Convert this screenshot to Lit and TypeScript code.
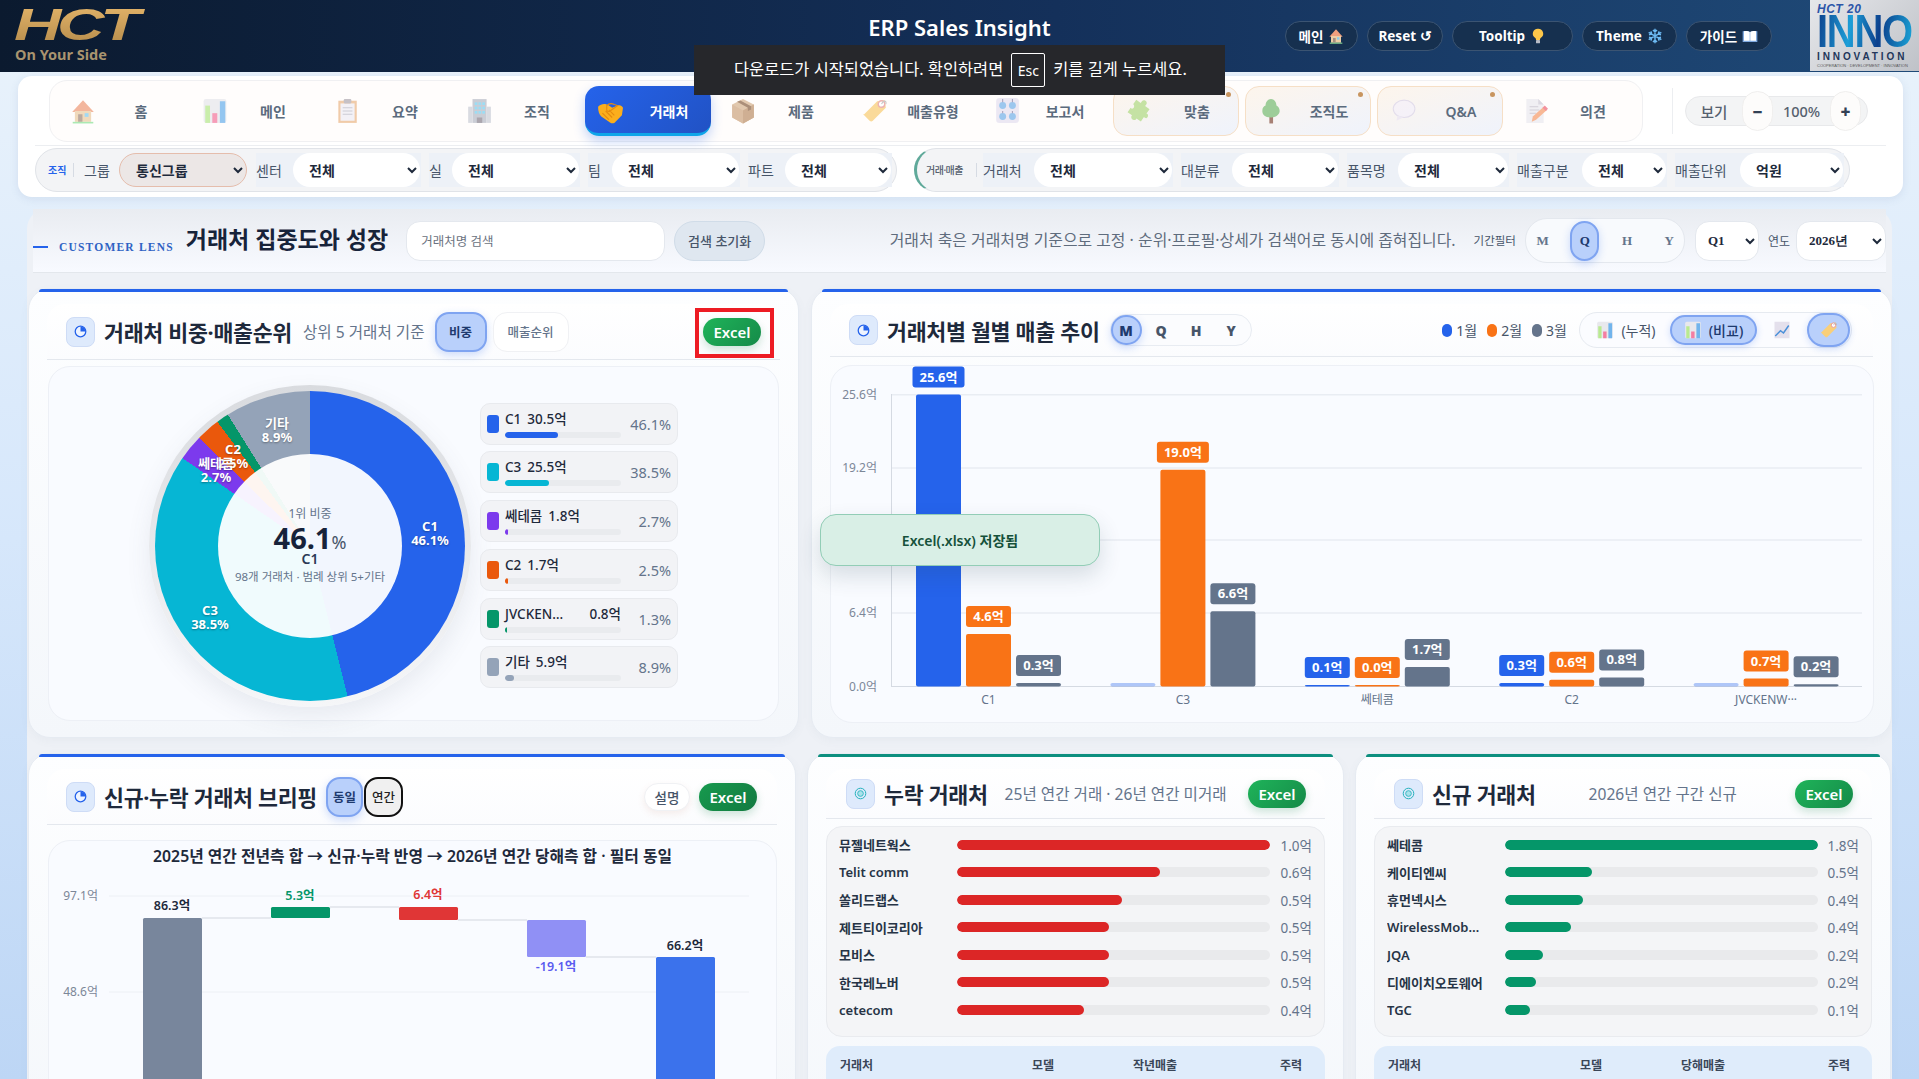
import { LitElement, html, css, svg } from "lit";
import { customElement } from "lit/decorators.js";

const I: Record<string, any> = {
  house: svg`<path d="M2 13 12 2l10 11H2z" fill="#ef9f7e"/><rect x="4.500" y="12" width="15" height="10" fill="#eccda6"/><rect x="7.500" y="15" width="4" height="7" fill="#a68f80"/><rect x="13.500" y="14" width="3.600" height="3.400" fill="#82cdf2"/><rect x="2.500" y="22" width="19" height="1.500" fill="#8fe39b"/>`,
  chart: svg`<rect x="1.500" y="1" width="21" height="22" rx="2" fill="#e8e8ed"/><rect x="3" y="7" width="4.400" height="16" fill="#b9ea91"/><rect x="9.500" y="14" width="4.600" height="9" fill="#f47ea2"/><rect x="16.500" y="3" width="5" height="20" fill="#71b4ec"/>`,
  clip: svg`<rect x="4" y="2.500" width="17" height="20.500" fill="#ecbb8e"/><rect x="6" y="5" width="13" height="16" fill="#efeef5"/><rect x="9" y="1" width="7" height="4" rx="1" fill="#b3aeb4"/><path d="M8 9h9M8 12h9M8 15h9" stroke="#bdbcc8"/>`,
  bld: svg`<rect x="6" y="1" width="13" height="22" fill="#b9bdc8"/><rect x="2" y="8" width="4" height="15" fill="#cdd0d8"/><rect x="19" y="8" width="4" height="15" fill="#cdd0d8"/><g fill="#7cd3f2"><rect x="8" y="4" width="2.500" height="2.500"/><rect x="11.500" y="4" width="2.500" height="2.500"/><rect x="15" y="4" width="2.500" height="2.500"/><rect x="8" y="8" width="2.500" height="2.500"/><rect x="11.500" y="8" width="2.500" height="2.500"/><rect x="15" y="8" width="2.500" height="2.500"/><rect x="8" y="12" width="2.500" height="2.500"/><rect x="11.500" y="12" width="2.500" height="2.500"/><rect x="15" y="12" width="2.500" height="2.500"/></g><rect x="10" y="18" width="5" height="5" fill="#8f8a94"/>`,
  hands: svg`<path d="M1 8c3-3 7-3 10-1l3 2 5-2c2-1 4 0 5 2l-1 7-7 7c-2 1-4 0-5-1l-7-5c-2-2-3-5-3-9z" fill="#fbae1c"/><path d="M9 7c2-2 5-2 7-1l3 1-7 5c-1 1-3 0-3-1zM5 14l6 6M8 12l6 6M11 11l5 5" stroke="#e58a0f" stroke-width="1" fill="none"/>`,
  box: svg`<path d="M12 1 22 6v12l-10 5.500L2 18V6z" fill="#d8b795"/><path d="M2 6l10 5.500L22 6v12l-10 5.500L2 18z" fill="#cfa986"/><path d="M12 11.500V23.500L22 18V6z" fill="#bf9670"/><path d="m6.500 3.500 10 5.500v3l3-1.500V7.500l-10-5.300z" fill="#8f6b4e"/>`,
  tag: svg`<path d="M2 15 14 3l7-1 1 7-12 12c-1 1-2 1-3 0l-5-5c-1-.4-1-1 0-1z" fill="#f9cf7a"/><circle cx="18" cy="5.500" r="3" fill="#fff" stroke="#e79a9a" stroke-width="1.300"/><path d="M18 5.500c2-4 5-3 4 0" stroke="#b8b8b8" fill="none"/>`,
  knob: svg`<rect x="2" y="0" width="21" height="23" rx="3" fill="#e6e2f1"/><g fill="#7cb6ea"><circle cx="8" cy="7" r="3.200"/><circle cx="17" cy="7" r="3.200"/><circle cx="8" cy="17" r="3.200"/><circle cx="17" cy="17" r="3.200"/></g><path d="M8 1v3M17 1v3M8 12v2M17 12v2" stroke="#8b88a8"/>`,
  puzzle: svg`<path d="M9 3c0-3 5-3 5 0v2h5v5c3-1 4 4 1 4h-1v5h-5c1 3-4 4-5 1v-1H4v-5c3 1 3-4 0-4V5h5z" fill="#b4dc8a" transform="rotate(35 12 12)"/>`,
  tree: svg`<rect x="10.500" y="17" width="3.400" height="6.500" fill="#8d5a4a"/><path d="M12 1c3 0 5 3 5 6 2 1 3 3 3 5s-2 6-8 6-8-3-8-6 1-4 3-5c0-3 2-6 5-6z" fill="#7fc07c"/>`,
  bubble: svg`<ellipse cx="13" cy="10" rx="10" ry="8" fill="#f5f1fa" stroke="#dcd6ea"/><path d="M7 16l-1 5 6-3z" fill="#ebe6f3"/>`,
  memo: svg`<path d="M4 1h11l5 5v17H4z" fill="#ecebf0"/><path d="M15 1v5h5z" fill="#cfcdd8"/><path d="M7 8h8M7 11h9M7 14h6" stroke="#c2c0cc"/><path d="m9 22 1-5 10-9 3 3-10 9z" fill="#f6a173"/><path d="m19 9 2-2 3 3-2 2z" fill="#ef6f80"/>`,
  bulb: svg`<path d="M12 1a7.500 7.500 0 0 0-4 14c1 1 1 2 1 3h6c0-1 0-2 1-3a7.500 7.500 0 0 0-4-14z" fill="#fdc74a"/><rect x="9" y="18" width="6" height="5" rx="1" fill="#b8bcc6"/>`,
  snow: svg`<g stroke="#6cb9f2" stroke-width="2.200" fill="none"><path d="M12 1v22M2.500 6.500l19 11M21.500 6.500l-19 11M9 3l3 3 3-3M9 21l3-3 3 3M3 10l4-1-1-4M21 14l-4 1 1 4M21 10l-4-1 1-4M3 14l4 1-1 4"/></g>`,
  book: svg`<path d="M1 5c4-1 8-1 11 1 3-2 7-2 11-1v16H1z" fill="#7fa9e0"/><path d="M3 5c3-1 7 0 8.500 1v13H3zM12.500 6c2-1 6-2 8.500-1v14h-8.500z" fill="#fff"/>`,
};
const ic = (n: string, cls = "ico") => html`<svg class=${cls} viewBox="0 0 24 24">${I[n]}</svg>`;

const NAV = [["house","홈"],["chart","메인"],["clip","요약"],["bld","조직"],["hands","거래처","on"],["box","제품"],["tag","매출유형"],["knob","보고서"],["puzzle","맞춤","sp"],["tree","조직도","sp"],["bubble","Q&A","sp"],["memo","의견"]];
const F1 = [["센터",165,37,"전체"],["실",151,23,"전체"],["팀",152,24,"전체"],["파트",144,37,"전체"]];
const F2 = [["거래처",190,51,"전체"],["대분류",158,51,"전체"],["품목명",162,51,"전체"],["매출구분",150,65,"전체"],["매출단위",169,65,"억원"]];
const PIE = [
  ["#2563eb",46.1],["#06b6d4",38.5],["#7c3aed",2.7],["#ea580c",2.5],["#059669",1.3],["#94a3b8",8.9],
] as [string, number][];
const PL = [["C1","46.1%",281,134],["C3","38.5%",61,218],["기타","8.9%",128,31],["C2","2.5%",84,57],["쎄테콤","2.7%",67,71]] as [string,string,number,number][];
const LEG = [["#2563eb","C1","30.5억","46.1%",46],["#06b6d4","C3","25.5억","38.5%",38],["#7c3aed","쎄테콤","1.8억","2.7%",3],["#ea580c","C2","1.7억","2.5%",3],["#059669","JVCKEN…","0.8억","1.3%",2],["#94a3b8","기타","5.9억","8.9%",8]] as [string,string,string,string,number][];
const LOST = [["뮤젤네트웍스",100,"1.0억"],["Telit comm",65,"0.6억"],["쏠리드랩스",52.6,"0.5억"],["제트티이코리아",48.6,"0.5억"],["모비스",48.6,"0.5억"],["한국레노버",48.6,"0.5억"],["cetecom",40.6,"0.4억"]] as [string,number,string][];
const NEWC = [["쎄테콤",100,"1.8억"],["케이티엔씨",27.8,"0.5억"],["휴먼넥시스",25,"0.4억"],["WirelessMob…",21,"0.4억"],["JQA",12,"0.2억"],["디에이치오토웨어",10,"0.2억"],["TGC",8,"0.1억"]] as [string,number,string][];
const GROUPS = [
  ["C1",[25.6,4.6,0.3],["25.6억","4.6억","0.3억"]],
  ["C3",[0.3,19.0,6.6],[null,"19.0억","6.6억"]],
  ["쎄테콤",[0.1,0.02,1.7],["0.1억","0.0억","1.7억"]],
  ["C2",[0.3,0.6,0.8],["0.3억","0.6억","0.8억"]],
  ["JVCKENW···",[0.3,0.7,0.2],[null,"0.7억","0.2억"]],
] as [string,number[],(string|null)[]][];
const BC = ["#2563eb","#f97316","#64748b"];

@customElement("app-root")
export class AppRoot extends LitElement {
  static styles = css`
    :host{display:block;width:100%;height:100vh;overflow:hidden;position:relative;font-family:"Noto Sans","Noto Sans CJK KR",sans-serif;color:#1e293b;background:linear-gradient(180deg,#eaf3fb 0,#d6e7fb 50%,#bdd6f5 100%)}
    *{box-sizing:border-box}
    svg{display:block;flex:none}
    .top{height:72px;display:grid;grid-template-columns:1fr auto 1fr;align-items:stretch;background:linear-gradient(90deg,#0b1a2f 0%,#14305a 55%,#1f4a78 100%)}
    .logo{padding:7px 0 0 14px;display:flex;flex-direction:column}
    .hct{font:italic 900 45px/36px "Liberation Sans",sans-serif;letter-spacing:-3px;background:linear-gradient(180deg,#e0b167,#b98f4e);-webkit-background-clip:text;background-clip:text;color:transparent;width:130px;transform:scaleX(1.46);transform-origin:left}
    .side{font-size:14.500px;font-weight:700;color:#a8946f;line-height:20px;margin-top:1px;margin-left:1px}
    .title{align-self:start;margin-top:11px;font-size:22px;font-weight:600;color:#fff;line-height:32px}
    .tr{display:flex;justify-content:flex-end;align-items:flex-start}
    .tbtns{display:flex;gap:9px;margin-top:21px;margin-right:38px}
    .tb{height:30px;border-radius:15px;background:#16304f;border:1px solid #3b5472;color:#fff;font-size:13.500px;font-weight:700;display:flex;align-items:center;justify-content:center;gap:5px;padding:0}
    .tb svg{width:16px;height:16px}
    .inno{width:109px;height:71px;background:linear-gradient(135deg,#e6e7ea,#bfc2c8);padding:3px 0 0 7px;display:flex;flex-direction:column;overflow:hidden}
    .i20{font:italic 800 12px/12px "Liberation Sans",sans-serif;color:#2c55a8;letter-spacing:.5px}
    .i1{font:900 46px/33px "Liberation Sans",sans-serif;letter-spacing:-1.500px;background:linear-gradient(100deg,#0c3f8c,#1d9fd8 35%,#0c3f8c 65%,#1aa5d8);-webkit-background-clip:text;background-clip:text;color:transparent;transform:scaleX(.87);transform-origin:left;height:33px;width:max-content}
    .i2{font:700 10px/12px "Liberation Sans",sans-serif;letter-spacing:2.900px;color:#22365a;margin-top:3px}
    .i3{font:400 4px/6px "Liberation Sans",sans-serif;color:#555;white-space:nowrap}
    .bar0{margin:4px 16px 0 18px;height:121px;border-radius:14px;background:#fff;padding:4px 0 0;display:flex;flex-direction:column;box-shadow:0 2px 8px rgba(80,110,160,.12)}
    .nr{display:flex;height:62px;padding-left:31px}
    .nav{width:1594px;height:62px;border:1px solid #f0f0f2;border-radius:18px;background:#fffdfc;padding:5px 0 0 7px;display:flex;gap:6px}
    .ni{position:relative;width:126px;height:50px;border-radius:14px;display:flex;align-items:center;padding-left:12px;border:1px solid transparent;font-size:14px;font-weight:600;color:#5b6b7d}
    .ico{width:26px;height:26px;opacity:.75}
    .ni .l{position:absolute;left:42px;right:0;text-align:center}
    .ni.on{background:linear-gradient(135deg,#2563eb,#2152c4);color:#fff;font-weight:700;border:0;border-bottom:3px solid #0ea5e9;box-shadow:0 5px 12px rgba(37,99,235,.28);padding-top:2px}
    .ni.on .ico{opacity:1}
    .ni.sp{background:linear-gradient(160deg,#fdf5ec,#eff3fc);border-color:#f6dfc6}
    .dot{position:absolute;right:7px;top:5px;width:5px;height:5px;border-radius:50%;background:#c8955f}
    .sep{width:1px;height:46px;background:#eceef1;margin:8px 0 0 29px}
    .view{margin:16px 0 0 12px;width:183px;height:30px;border-radius:15px;background:#f3f4f5;border:1px solid #e8e9eb;display:flex;align-items:center;font-size:14.500px;color:#55606e;position:relative}
    .vl{width:56px;text-align:center;font-weight:500}
    .vb{width:31px;height:40px;border-radius:16px;background:#fdfcfb;border:1px solid #f0efee;display:flex;align-items:center;justify-content:center;font-weight:900;color:#334155;font-size:17px;margin:0}
    .vp{width:57px;text-align:center;font-weight:500}
    .hr{height:1px;background:#eceef1;margin:3px 17px 0 17px}
    .fr{display:flex;padding-left:17px;margin-top:2px;gap:17px}
    .fg{height:44px;border:1px solid #e0e3e8;border-radius:22px;background:#f3f4f6;display:flex;align-items:center;gap:8px}
    .fg.a{width:862px}.fg.b{width:936px;border-left:3px solid #5fa99a}
    .tag{font-size:10px;font-weight:700;color:#2563eb;width:26px;margin-left:12px;border-right:1px solid #d6dbe3;line-height:14px}
    .fg.b .tag{color:#55606e;font-weight:500;width:51px;margin-left:9px;margin-right:-2px;letter-spacing:-.5px;white-space:nowrap}
    .g0{font-size:14px;color:#475569;margin-left:2px;width:27px;white-space:nowrap}
    .fd{height:34px;background:#edf1f7;display:flex;align-items:center;font-size:14px;color:#475569}
    .fd span{white-space:nowrap;flex:none}
    select{appearance:auto;height:34px;border:0;border-radius:17px;background:#fff;font:600 14px "Noto Sans","Noto Sans CJK KR",sans-serif;color:#1e293b;padding:0 0 0 12px;flex:none;outline:0}
    select.pk{width:128px;background:#ece7e6;border:1px solid #e5bdac;margin-right:1px}
    .main{margin:12px 0 0 27px;width:1865px;height:1000px;background:#eef1f6;border-radius:20px 20px 0 0;padding:0 0 0 1px}
    .mh{height:64px;margin:0 6px 0 5px;border-bottom:1px solid #e3e7ec;display:flex;align-items:center;background:linear-gradient(180deg,#e9ecf1,#f8faff)}
    .dash{width:15px;height:2px;background:#2563eb;margin-top:13px}
    .cl{font:700 11.500px "Liberation Serif",serif;letter-spacing:1.200px;color:#2f62c4;margin:13px 0 0 11px;white-space:nowrap}
    .h1{font-size:23px;font-weight:700;color:#17233a;margin:-6px 0 0 12px;white-space:nowrap}
    .srch{width:259px;height:40px;border-radius:14px;border:1px solid #e4e8ee;background:#fff;margin-left:18px;font-size:12.500px;color:#6b7280;display:flex;align-items:center;padding-left:14px}
    .rs{width:91px;height:40px;border-radius:20px;background:#dfe7f0;border:1px solid #d0dce8;margin-left:9px;display:flex;align-items:center;justify-content:center;font-size:13px;font-weight:500;color:#475569}
    .desc{margin-left:auto;font-size:15.900px;color:#5f6c7d;white-space:nowrap;margin-top:-2px}
    .pf{font-size:11.500px;margin-left:18px;color:#475569;white-space:nowrap;margin-top:-2px}
    .ps{margin-left:9px;width:160px;height:45px;border-radius:22px;background:#f8fafd;border:1px solid #e4e8ee;display:flex;align-items:center;gap:13px;padding-left:2px;font:700 13px "Liberation Serif",serif;color:#64748b}
    .ps b{width:30px;height:40px;border-radius:15px;display:flex;align-items:center;justify-content:center;font-weight:700}
    .ps b.on,.sg b.on,.bt.on{background:#b9d0fb;border:2px solid #7fa4f1;color:#1e3a6e;box-shadow:0 3px 9px rgba(37,99,235,.22)}
    .sl{height:40px;border-radius:14px;border:1px solid #e4e8ee;background:#fff;font:700 13px "Liberation Serif",serif;padding-left:8px}
    .sl.q{width:64px;margin-left:10px}.sl.y{width:90px;margin-left:6px}
    .yl{font-size:12px;color:#475569;margin-left:9px}
    .rw{display:grid;gap:12px;margin-top:15px}
    .r1{grid-template-columns:771px 1081px;height:450px}
    .r2{grid-template-columns:768px 537px 536px;gap:12px 11px;margin-top:15px;height:400px}
    .card{background:linear-gradient(180deg,#fdfeff,#f4f7fb);border-radius:22px;border:1px solid #e6ebf2;padding:0 18px;min-width:0;box-shadow:0 3px 10px rgba(90,110,140,.05)}
    .tp{height:3px;margin:0 -8px;border-radius:3px 3px 0 0;background:#2563eb}
    .tp.t{background:#0d8f7f}
    .hd{display:flex;align-items:center;margin-top:12px;height:56px;background:linear-gradient(180deg,#fff,#fbfcfe);border-radius:18px 18px 0 0;border-bottom:1px solid #e4e8ee;padding-left:19px;position:relative}
    .cio{width:29px;height:30px;border-radius:8px;background:#deeafc;border:1px solid #cedcf6;display:flex;align-items:center;justify-content:center;flex:none}
    .cio svg{width:13px;height:13px}
    .h2{font-size:21.700px;font-weight:700;color:#1e293b;margin-left:9px;white-space:nowrap;letter-spacing:-.3px}
    .sub{font-size:15.600px;color:#64748b;white-space:nowrap}
    .bt{height:40px;border-radius:14px;display:flex;align-items:center;justify-content:center;font-size:12.500px;font-weight:500;background:#fff;border:1px solid #f0f1f4;color:#64748b;flex:none}
    .bt.on{font-weight:700}
    .xl{height:28px;border-radius:14px;width:58px;background:linear-gradient(135deg,#1fb45a,#158a48);color:#fff;font-size:15px;font-weight:600;display:flex;align-items:center;justify-content:center;flex:none;box-shadow:0 4px 8px rgba(22,130,70,.2)}
    .redb{position:absolute;right:6px;top:4px;width:79px;height:50px;border:4px solid #ed1c24}
    .pn{background:#f9fbff;border:1px solid #edf0f6;border-radius:22px;margin-top:6px;height:355px;display:flex;align-items:center;margin-left:1px;margin-right:1px;padding-top:4px}
    .pie{position:relative;width:322px;height:322px;margin-left:100px;border-radius:50%;background:linear-gradient(180deg,#d9dbdf,#f5f6f8);box-shadow:0 10px 24px rgba(80,90,110,.1);flex:none}
    .cone{position:absolute;inset:6px;border-radius:50%}
    .hole{position:absolute;inset:69px;border-radius:50%;background:rgba(255,255,255,.94);display:flex;flex-direction:column;align-items:center;color:#64748b;padding-top:51px}
    .hole .a{font-size:12px;line-height:18px}
    .hole .b{font-size:29px;font-weight:700;line-height:34px;color:#17233a;margin-top:-2px}
    .hole .b i{font-style:normal;font-size:18px;font-weight:400;color:#475569}
    .hole .c{font-size:14px;font-weight:600;line-height:18px;color:#2a3a55;margin-top:-9px}
    .hole .d{font-size:11.500px;line-height:20px;white-space:nowrap;margin-top:-1px}
    .pl{position:absolute;color:#fff;font-size:13px;font-weight:700;line-height:14px;text-align:center;transform:translateX(-50%);text-shadow:0 1px 2px rgba(0,0,0,.35);white-space:nowrap}
    .lg{margin-left:9px;display:flex;flex-direction:column;gap:6.800px;width:198px}
    .li{height:42px;border-radius:10px;background:#f2f3f6;border:1px solid #e8eaee;position:relative;padding-left:6px;display:flex;align-items:center}
    .sw{width:12px;height:18px;border-radius:3px;flex:none}
    .lx{margin-left:6px;width:116px}
    .lt{display:flex;justify-content:space-between;font-size:13.500px;font-weight:500;color:#1e293b;line-height:19px;white-space:nowrap;padding-bottom:3px}
    .lt span+span{margin-left:6px}
    .lt.e{justify-content:space-between}.lt:not(.e){justify-content:flex-start}
    .tk{height:6px;background:#e9ebee;border-radius:3px;overflow:hidden}
    .tk i{display:block;height:100%;border-radius:3px}
    .lp{position:absolute;right:6px;top:50%;transform:translateY(-50%);font-size:14.500px;color:#64748b}
    .hd2{height:53px}
    .sg{display:flex;align-items:center;margin-left:10px;width:142px;height:32px;border-radius:16px;background:#fbfcfe;border:1px solid #e8ecf2;font-size:14px;font-weight:700;color:#475569;flex:none}
    .sg b{width:33px;height:30px;border-radius:15px;display:flex;align-items:center;justify-content:center;margin-right:4px}
    .ml{margin-left:auto;display:flex;align-items:center;font-size:14px;color:#475569;gap:4px;white-space:nowrap}
    .ml i{width:10px;height:13px;border-radius:5px;display:block}
    .ml i:not(:first-child){margin-left:6px}
    .tg{margin-left:12px;margin-right:21px;width:273px;height:36px;border-radius:18px;border:1px solid #e6eaf0;background:#fbfcff;display:flex;align-items:center;font-size:14px;color:#475569;position:relative;flex:none}
    .tg .o{display:flex;align-items:center;gap:7px;height:30px;justify-content:center;white-space:nowrap}
    .tg svg{width:18px;height:20px}
    .tg .on{background:#b9d0fb;border:2px solid #7fa4f1;border-radius:15px;box-shadow:0 2px 7px rgba(37,99,235,.2)}
    .pc{background:#f9fbff;border:1px solid #edf0f6;border-radius:22px;margin:8px 0 0 0;height:358px;width:1044px;overflow:hidden}
    .wf{background:#f9fbff;border:1px solid #edf0f6;border-radius:22px;margin:15px 0 0 1px;width:729px;height:300px}
    .wt{text-align:center;font-size:15.800px;font-weight:600;color:#1e293b;line-height:20px;margin-top:5px;white-space:nowrap}
    .sm{height:50px;padding-left:20px}
    .br{background:#f4f5f7;border:1px solid #e9ebef;border-radius:16px;margin-top:7px;height:211px;padding:4px 12px 0}
    .rr{display:grid;grid-template-columns:118px 313px 1fr;height:27.500px;align-items:center;font-size:13px;font-weight:600;color:#263446}
    .rr .nm{white-space:nowrap;overflow:hidden}
    .rt{height:10px;border-radius:5px;background:#e9eaec;overflow:hidden}
    .rt i{display:block;height:100%;border-radius:5px}
    .rv{text-align:right;font-size:13.500px;font-weight:400;color:#64748b}
    .th{margin-top:9px;height:60px;background:#dfecfb;border-radius:14px 14px 0 0;display:grid;grid-template-columns:192px 101px 147px 1fr;padding:10px 0 0 14px;font-size:12px;font-weight:600;color:#3a4658;line-height:20px}
    .nt{position:absolute;left:694px;top:45px;width:531px;height:50px;background:#26272b;color:#fff;font-size:16.400px;display:flex;align-items:center;padding:0 0 4px 40px;white-space:nowrap}
    .nt kbd{font:inherit;font-size:14px;border:1px solid #fff;border-radius:2px;height:34px;width:34px;display:flex;align-items:center;justify-content:center;margin:4px 8px 0 8px}
    .toast{position:absolute;left:820px;top:514px;width:280px;height:52px;border-radius:16px;background:#d9efe6;border:1px solid #92cdb6;box-shadow:0 10px 22px rgba(40,70,80,.16);display:flex;align-items:center;justify-content:center;font-size:14px;font-weight:600;color:#15513a}
    text{font-family:"Noto Sans","Noto Sans CJK KR",sans-serif}
  `;

  cone() {
    let a = 0;
    const s = PIE.map(([c, v]) => { const f = a; a += v; return `${c} ${f}% ${a}%`; }).join(",");
    return `background:conic-gradient(${s})`;
  }

  field(f: any[]) {
    return html`<div class="fd" style="width:${f[1]}px"><span style="width:${f[2]}px">${f[0]}</span><select style="width:${f[1] - f[2] - 1}px"><option>${f[3]}</option></select></div>`;
  }

  pieIco() { return html`<svg viewBox="0 0 16 16"><circle cx="8" cy="8" r="6.500" fill="#eef4ff" stroke="#2563eb" stroke-width="1.600"/><path d="M8 8V2a6 6 0 0 1 6 6z" fill="#2563eb"/></svg>`; }
  ringIco() { return html`<svg viewBox="0 0 16 16"><circle cx="8" cy="8" r="6.500" fill="none" stroke="#22b0bb" stroke-width="1.200"/><circle cx="8" cy="8" r="3.500" fill="#a8e2ea" stroke="#22b0bb"/></svg>`; }

  barChart() {
    const y0 = 685.5, k = 292 / 25.6;
    const grid = [[393.7,"25.6억"],[467,"19.2억"],[539,""],[612,"6.4억"]] as [number,string][];
    return html`<svg width="1042" height="356" viewBox="831 365 1042 356">
      ${grid.map(([y, t]) => svg`<line x1="891" x2="1862" y1=${y} y2=${y} stroke="#e9edf3" stroke-width="1.500"/><text x="877" y=${y + 4} text-anchor="end" font-size="12" fill="#7c8798">${t}</text>`)}
      <text x="877" y="689.500" text-anchor="end" font-size="12" fill="#7c8798">0.0억</text>
      <line x1="891.500" x2="891.500" y1="393" y2="686" stroke="#d5dae2"/><line x1="891" x2="1862" y1="685.500" y2="685.500" stroke="#d5dae2"/>
      ${GROUPS.map(([name, vals, labs], g) => {
        const gx = 916 + g * 194.4;
        return svg`${vals.map((v, i) => {
          const x = gx + i * 50, h = Math.max(v * k, 1.5), lab = labs[i], yt = y0 - h;
          const w = g === 0 && i === 0 || lab === "19.0억" ? 52 : 45;
          const lx = x + 22.5 - w / 2;
          const ly = yt - 28;
          return svg`<rect x=${x} y=${yt} width="45" height=${h} rx="2" fill=${BC[i]} opacity=${lab ? 1 : 0.35}/>
            ${lab ? svg`<rect x=${lx} y=${ly} width=${w} height="21" rx="3" fill=${BC[i]}/><text x=${x + 22.5} y=${ly + 15} text-anchor="middle" font-size="13" font-weight="700" fill="#fff">${lab}</text>` : ""}`;
        })}<text x=${gx + 72.5} y="703" text-anchor="middle" font-size="12" fill="#64748b">${name}</text>`;
      })}
    </svg>`;
  }

  waterfall() {
    const bars = [
      [143, 917, 300, "#78869c", "86.3억", 172, 909, "#1e293b"],
      [271, 906, 11, "#059669", "5.3억", 300, 899, "#059669"],
      [399, 906, 13, "#e03636", "6.4억", 428, 898, "#e03636"],
      [527, 919, 37, "#9090f5", "-19.1억", 556, 970, "#5b5bf0"],
      [656, 956, 300, "#3b72ec", "66.2억", 685, 949, "#1e293b"],
    ] as [number, number, number, string, string, number, number, string][];
    const conn = [[202, 271, 917], [330, 399, 906], [458, 527, 919], [586, 656, 956]];
    return html`<svg width="727" height="240" viewBox="49 865 727 240">
      <line x1="109" x2="749" y1="895" y2="895" stroke="#edf0f5"/><line x1="109" x2="749" y1="991" y2="991" stroke="#edf0f5"/>
      <text x="98" y="899" text-anchor="end" font-size="12" fill="#7c8798">97.1억</text><text x="98" y="995" text-anchor="end" font-size="12" fill="#7c8798">48.6억</text>
      ${conn.map(([a, b, y]) => svg`<line x1=${a} x2=${b} y1=${y} y2=${y} stroke="#dfe3ea" stroke-width="1.500"/>`)}
      ${bars.map(([x, y, h, c, t, tx, ty, tc]) => svg`<rect x=${x} y=${y} width="59" height=${h} rx="1.500" fill=${c}/><text x=${tx} y=${ty} text-anchor="middle" font-size="12.500" font-weight="600" fill=${tc}>${t}</text>`)}
    </svg>`;
  }

  rankCard(title: string, sub: string, subCls: string, rows: [string, number, string][], color: string, cols: string[]) {
    return html`<section class="card">
      <div class="tp t"></div>
      <div class="hd sm"><div class="cio">${this.ringIco()}</div><div class="h2">${title}</div><div class="sub" style=${subCls}>${sub}</div><div class="xl" style="margin-left:auto;margin-right:19px">Excel</div></div>
      <div class="br">${rows.map(([n, w, v]) => html`<div class="rr"><div class="nm">${n}</div><div class="rt"><i style="width:${w}%;background:${color}"></i></div><div class="rv">${v}</div></div>`)}</div>
      <div class="th">${cols.map((c) => html`<div>${c}</div>`)}</div>
    </section>`;
  }

  render() {
    return html`
      <header class="top">
        <div class="logo"><div class="hct">HCT</div><div class="side">On Your Side</div></div>
        <div class="title">ERP Sales Insight</div>
        <div class="tr">
          <div class="tbtns">
            <div class="tb" style="width:73px">메인 ${ic("house", "")}</div>
            <div class="tb" style="width:76px">Reset ↺</div>
            <div class="tb" style="width:121px">Tooltip ${ic("bulb", "")}</div>
            <div class="tb" style="width:95px">Theme ${ic("snow", "")}</div>
            <div class="tb" style="width:86px">가이드 ${ic("book", "")}</div>
          </div>
          <div class="inno"><div class="i20">HCT 20</div><div class="i1">INNO</div><div class="i2">INNOVATION</div><div class="i3">COOPERATION · DEVELOPMENT · INNOVATION</div></div>
        </div>
      </header>

      <div class="bar0">
        <div class="nr">
          <nav class="nav">${NAV.map(([i, l, k]) => html`<div class="ni ${k || ""}">${ic(i)}<span class="l">${l}</span>${k === "sp" ? html`<span class="dot"></span>` : ""}</div>`)}</nav>
          <div class="sep"></div>
          <div class="view"><div class="vl">보기</div><div class="vb">−</div><div class="vp">100%</div><div class="vb">+</div></div>
        </div>
        <div class="hr"></div>
        <div class="fr">
          <div class="fg a"><div class="tag">조직</div><div class="g0">그룹</div><select class="pk"><option>통신그룹</option></select>${F1.map((f) => this.field(f))}</div>
          <div class="fg b"><div class="tag">거래·매출</div>${F2.map((f) => this.field(f))}</div>
        </div>
      </div>

      <main class="main">
        <div class="mh">
          <div class="dash"></div><div class="cl">CUSTOMER LENS</div><div class="h1">거래처 집중도와 성장</div>
          <div class="srch">거래처명 검색</div><div class="rs">검색 초기화</div>
          <div class="desc">거래처 축은 거래처명 기준으로 고정 · 순위·프로필·상세가 검색어로 동시에 좁혀집니다.</div>
          <div class="pf">기간필터</div>
          <div class="ps"><b>M</b><b class="on">Q</b><b>H</b><b>Y</b></div>
          <select class="sl q"><option>Q1</option></select><div class="yl">연도</div><select class="sl y"><option>2026년</option></select>
        </div>

        <div class="rw r1">
          <section class="card">
            <div class="tp"></div>
            <div class="hd">
              <div class="cio">${this.pieIco()}</div><div class="h2">거래처 비중·매출순위</div>
              <div class="sub" style="margin-left:11px">상위 5 거래처 기준</div>
              <div class="bt on" style="width:52px;margin-left:10px">비중</div><div class="bt" style="width:76px;margin-left:6px">매출순위</div>
              <div class="xl" style="margin-left:auto;margin-right:19px">Excel</div>
              <div class="redb"></div>
            </div>
            <div class="pn">
              <div class="pie">
                <div class="cone" style=${this.cone()}></div>
                <div class="hole"><div class="a">1위 비중</div><div class="b">46.1<i>%</i></div><div class="c">C1</div><div class="d">98개 거래처 · 범례 상위 5+기타</div></div>
                ${PL.map(([a, b, x, y]) => html`<div class="pl" style="left:${x}px;top:${y}px">${a}<br />${b}</div>`)}
              </div>
              <div class="lg">${LEG.map(([c, n, v, p, w]) => html`<div class="li"><div class="sw" style="background:${c}"></div><div class="lx"><div class="lt ${n.includes("…") ? "e" : ""}"><span>${n}</span><span>${v}</span></div><div class="tk"><i style="width:${w}%;background:${c}"></i></div></div><div class="lp">${p}</div></div>`)}</div>
            </div>
          </section>

          <section class="card">
            <div class="tp"></div>
            <div class="hd hd2">
              <div class="cio">${this.pieIco()}</div><div class="h2">거래처별 월별 매출 추이</div>
              <div class="sg"><b class="on">M</b><b>Q</b><b>H</b><b>Y</b></div>
              <div class="ml"><i style="background:#2563eb"></i>1월<i style="background:#f97316"></i>2월<i style="background:#64748b"></i>3월</div>
              <div class="tg">
                <div class="o" style="width:88px;margin-left:2px">${ic("chart", "")}(누적)</div>
                <div class="o on" style="width:87px">${ic("chart", "")}<b style="font-weight:500;color:#1e3a6e">(비교)</b></div>
                <div class="o" style="width:50px"><svg viewBox="0 0 24 24"><rect x="2" y="1" width="20" height="22" fill="#e4e0ec"/><path d="M3 20 10 13l4 3 7-10" stroke="#4a90d9" stroke-width="2" fill="none"/></svg></div>
                <div class="o on" style="width:43px;height:34px;border-radius:17px">${ic("tag", "")}</div>
              </div>
            </div>
            <div class="pc">${this.barChart()}</div>
          </section>
        </div>

        <div class="rw r2">
          <section class="card">
            <div class="tp"></div>
            <div class="hd">
              <div class="cio">${this.pieIco()}</div><div class="h2">신규·누락 거래처 브리핑</div>
              <div class="bt on" style="width:37px;margin-left:9px">동일</div><div class="bt" style="width:39px;background:#f0f0f0;border:2px solid #111;color:#222;margin-left:1px">연간</div>
              <div class="bt" style="width:46px;height:28px;margin-left:auto;font-size:13.500px;box-shadow:0 3px 7px rgba(200,120,100,.12);color:#475569">설명</div>
              <div class="xl" style="margin-left:9px;margin-right:20px;background:linear-gradient(135deg,#169a4e,#137a40)">Excel</div>
            </div>
            <div class="wf"><div class="wt">2025년 연간 전년측 합 → 신규·누락 반영 → 2026년 연간 당해측 합 · 필터 동일</div>${this.waterfall()}</div>
          </section>
          ${this.rankCard("누락 거래처", "25년 연간 거래 · 26년 연간 미거래", "margin-left:17px", LOST, "#dc2626", ["거래처", "모델", "작년매출", "주력"])}
          ${this.rankCard("신규 거래처", "2026년 연간 구간 신규", "margin-left:53px", NEWC, "#059669", ["거래처", "모델", "당해매출", "주력"])}
        </div>
      </main>

      <div class="nt">다운로드가 시작되었습니다. 확인하려면 <kbd>Esc</kbd> 키를 길게 누르세요.</div>
      <div class="toast">Excel(.xlsx) 저장됨</div>
    `;
  }
}
